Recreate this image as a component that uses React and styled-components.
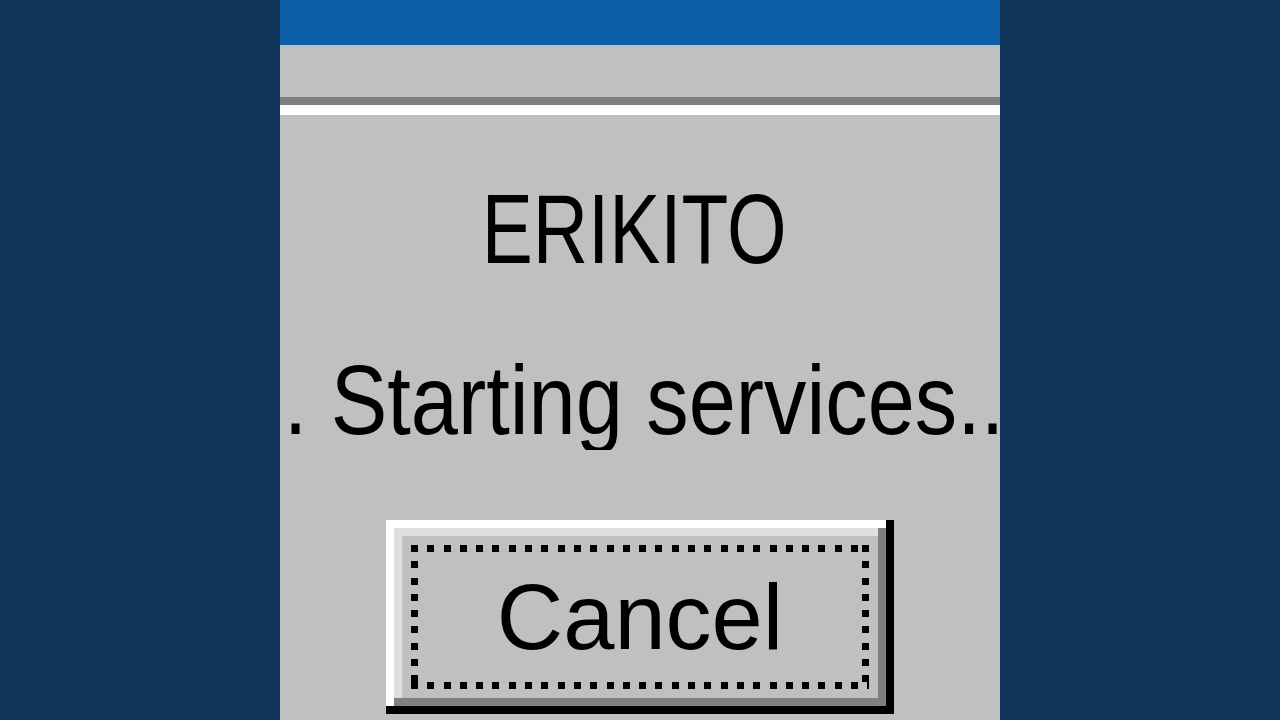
import styled, { createGlobalStyle } from 'styled-components';

const GlobalStyle = createGlobalStyle`
  html, body {
    margin: 0;
    padding: 0;
    background: #0e3558;
    overflow: hidden;
  }
`;

const Screen = styled.div`
  width: 1280px;
  height: 720px;
  display: flex;
  justify-content: center;
  background: #0e3558;
`;

const Window = styled.div`
  width: 720px;
  height: 720px;
  background: #c0c0c0;
  display: flex;
  flex-direction: column;
  overflow: hidden;
`;

const TitleBar = styled.div`
  height: 45px;
  flex-shrink: 0;
  background: #0b5ea8;
`;

const MenuStrip = styled.div`
  height: 52px;
  flex-shrink: 0;
`;

const Groove = styled.div`
  height: 0;
  flex-shrink: 0;
  border-top: 8px solid #808080;
  border-bottom: 10px solid #ffffff;
`;

const Body = styled.div`
  display: flex;
  flex-direction: column;
  align-items: center;
  padding-top: 64px;
`;

const Line = styled.div`
  width: 100%;
  display: flex;
  justify-content: center;
  overflow: hidden;
  white-space: nowrap;
  height: 100px;
  line-height: 100px;
  margin-top: ${(p) => p.$gap || 0}px;
  padding-right: ${(p) => p.$shift || 0}px;
  box-sizing: border-box;
  font-family: 'Liberation Sans', Arial, sans-serif;
  font-size: 99px;
  color: #000;
`;

// the dialog font is a narrow bitmap face, so squeeze the text horizontally
const Narrow = styled.span`
  display: inline-block;
  flex-shrink: 0;
  transform: scaleX(${(p) => p.$scale});
  transform-origin: center;
`;

const Button = styled.button`
  margin-top: 70px;
  width: 508px;
  height: 194px;
  box-sizing: border-box;
  padding: 25px;
  border: none;
  background: #c0c0c0;
  box-shadow:
    inset -8px -8px 0 #000000,
    inset 8px 8px 0 #ffffff,
    inset -16px -16px 0 #808080,
    inset 16px 16px 0 #dfdfdf;
  display: flex;
  cursor: default;
`;

const FocusRing = styled.span`
  flex: 1;
  display: flex;
  align-items: center;
  justify-content: center;
  background:
    repeating-linear-gradient(90deg, #000 0 7px, transparent 7px 16.3px) left top / 100% 7px no-repeat,
    repeating-linear-gradient(90deg, #000 0 7px, transparent 7px 16.3px) left bottom / 100% 7px no-repeat,
    repeating-linear-gradient(180deg, #000 0 7px, transparent 7px 16.3px) left top / 7px 100% no-repeat,
    repeating-linear-gradient(180deg, #000 0 7px, transparent 7px 16.3px) right top / 7px 100% no-repeat;
  font-family: 'Liberation Sans', Arial, sans-serif;
  font-size: 92px;
  line-height: 1;
  color: #000;
`;

export default function App() {
  return (
    <>
      <GlobalStyle />
      <Screen>
        <Window>
          <TitleBar />
          <MenuStrip />
          <Groove />
          <Body>
            <Line $shift={12}>
              <Narrow $scale={0.773}>ERIKITO</Narrow>
            </Line>
            <Line $gap={71} $shift={15}>
              <Narrow $scale={0.856}>8. Starting services...</Narrow>
            </Line>
            <Button type="button">
              <FocusRing>Cancel</FocusRing>
            </Button>
          </Body>
        </Window>
      </Screen>
    </>
  );
}
